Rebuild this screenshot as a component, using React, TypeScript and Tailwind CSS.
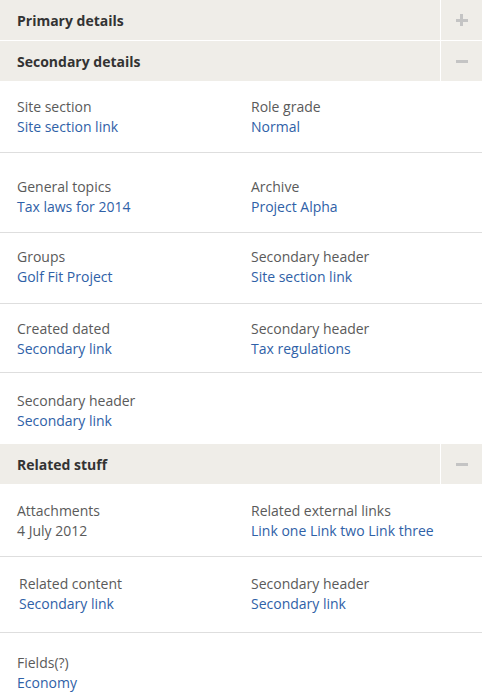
import React from 'react';

type Field = { label: string; value: string; link?: boolean };

function Header({ title, open }: { title: string; open: boolean }) {
  return (
    <div className="flex h-10 bg-[#efede8]">
      <div className="flex flex-1 items-center pl-[17px] text-[14px] font-bold text-[#333333]">{title}</div>
      <div className="flex w-[42px] items-center justify-center border-l border-white">
        {open ? (
          <span className="block h-[3px] w-[12px] bg-[#c4c4c4]" />
        ) : (
          <span className="relative block h-[12px] w-[12px]">
            <span className="absolute left-0 top-[4.5px] h-[3px] w-[12px] bg-[#c4c4c4]" />
            <span className="absolute left-[4.5px] top-0 h-[12px] w-[3px] bg-[#c4c4c4]" />
          </span>
        )}
      </div>
    </div>
  );
}

function Cell({ f }: { f?: Field }) {
  if (!f) return <div />;
  return (
    <div className="leading-5">
      <div className="text-[#5a5a5a]">{f.label}</div>
      <div className={f.link === false ? 'text-[#5a5a5a]' : 'text-[#2f61a7]'}>{f.value}</div>
    </div>
  );
}

function Row({ a, b, pad, border = true, indent = 'pl-[17px]' }: { a: Field; b?: Field; pad: string; border?: boolean; indent?: string }) {
  return (
    <div className={`grid grid-cols-[234px_1fr] ${indent} ${pad} ${border ? 'border-b border-[#dedede]' : ''}`}>
      <Cell f={a} />
      <Cell f={b} />
    </div>
  );
}

export default function App() {
  return (
    <div className="w-[482px] bg-white text-[14px]" style={{ fontFamily: '"Open Sans", "Noto Sans", sans-serif' }}>
      <Header title="Primary details" open={false} />
      <div className="h-px bg-white" />
      <Header title="Secondary details" open />
      <Row a={{ label: 'Site section', value: 'Site section link' }} b={{ label: 'Role grade', value: 'Normal' }} pad="pt-4 pb-[15px]" />
      <Row a={{ label: 'General topics', value: 'Tax laws for 2014' }} b={{ label: 'Archive', value: 'Project Alpha' }} pad="pt-6 pb-[15px]" />
      <Row a={{ label: 'Groups', value: 'Golf Fit Project' }} b={{ label: 'Secondary header', value: 'Site section link' }} pad="pt-[14px] pb-[16px]" />
      <Row a={{ label: 'Created dated', value: 'Secondary link' }} b={{ label: 'Secondary header', value: 'Tax regulations' }} pad="pt-[15px] pb-[13px]" />
      <Row a={{ label: 'Secondary header', value: 'Secondary link' }} pad="pt-[18px] pb-[13px]" border={false} />
      <Header title="Related stuff" open />
      <Row a={{ label: 'Attachments', value: '4 July 2012', link: false }} b={{ label: 'Related external links', value: 'Link one Link two Link three' }} pad="pt-[17px] pb-[15px]" />
      <Row a={{ label: 'Related content', value: 'Secondary link' }} b={{ label: 'Secondary header', value: 'Secondary link' }} pad="pt-[17px] pb-[18px]" indent="pl-[19px] [&>*:last-child]:-ml-[2px]" />
      <Row a={{ label: 'Fields(?)', value: 'Economy' }} pad="pt-5 pb-[8px]" border={false} />
    </div>
  );
}
